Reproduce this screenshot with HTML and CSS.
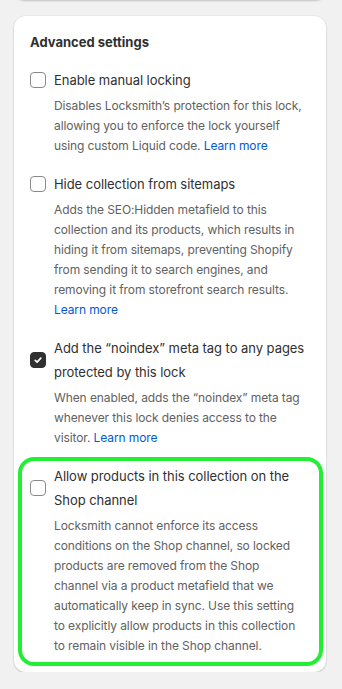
FILE: index.html
```html
<!DOCTYPE html>
<html lang="en">
<head>
  <meta charset="UTF-8">
  <meta name="viewport" content="width=device-width, initial-scale=1.0">
  <title>Advanced settings</title>
  <link rel="stylesheet" href="styles.css">
</head>
<body>
  <!-- bottom of the card above, scrolled off -->
  <div class="card card-prev"></div>

  <div class="card">
    <h2 class="card-title">Advanced settings</h2>

    <div class="option">
      <div class="option-row">
        <span class="checkbox"></span>
        <span class="option-label">Enable manual locking</span>
      </div>
      <p class="option-help">Disables Locksmith’s protection for this lock, allowing you to enforce the lock yourself using custom Liquid code. <a href="#">Learn more</a></p>
    </div>

    <div class="option">
      <div class="option-row">
        <span class="checkbox"></span>
        <span class="option-label">Hide collection from sitemaps</span>
      </div>
      <p class="option-help">Adds the SEO:Hidden metafield to this collection and its products, which results in hiding it from sitemaps, preventing Shopify from sending it to search engines, and removing it from storefront search results. <a href="#">Learn more</a></p>
    </div>

    <div class="option">
      <div class="option-row">
        <span class="checkbox checked">
          <svg width="10" height="10" viewBox="0 0 10 10"><path d="M2.2 5.3l1.9 1.8 3.7-4" fill="none" stroke="#fff" stroke-width="1.6" stroke-linecap="round" stroke-linejoin="round"/></svg>
        </span>
        <span class="option-label">Add the “noindex” meta tag to any pages protected by this lock</span>
      </div>
      <p class="option-help">When enabled, adds the “noindex” meta tag whenever this lock denies access to the visitor. <a href="#">Learn more</a></p>
    </div>

    <div class="option highlighted">
      <div class="option-row">
        <span class="checkbox"></span>
        <span class="option-label">Allow products in this collection on the Shop channel</span>
      </div>
      <p class="option-help">Locksmith cannot enforce its access conditions on the Shop channel, so locked products are removed from the Shop channel via a product metafield that we automatically keep in sync. Use this setting to explicitly allow products in this collection to remain visible in the Shop channel.</p>
    </div>
  </div>
</body>
</html>
```

FILE: styles.css
```css
/* General Styles */
* {
  box-sizing: border-box;
}

body {
  margin: 0;
  padding: 0 16px 0 14px;
  background-color: #f1f1f1;
  font-family: Inter, "Noto Sans", sans-serif;
  color: #303030;
}

.card {
  background-color: #fff;
  border-radius: 12px;
  box-shadow: 0 1px 2px rgba(26, 26, 26, 0.18), 0 0 0 1px rgba(26, 26, 26, 0.03);
  padding: 16px;
  margin-top: 16px;
}

.card-prev {
  height: 20px;
  padding: 0;
  margin-top: -20px;
}

.card-title {
  margin: 0;
  font-size: 13px;
  line-height: 20px;
  font-weight: 650;
}

/* Options */
.option {
  margin-top: 16px;
}

.option-row {
  display: flex;
  align-items: center;
  gap: 8px;
}

.checkbox {
  flex: none;
  width: 16px;
  height: 16px;
  border: 1px solid #8a8a8a;
  border-radius: 4px;
  background-color: #fff;
  display: flex;
  align-items: center;
  justify-content: center;
}

.checkbox.checked {
  background-color: #303030;
  border-color: #303030;
}

.option-label {
  font-size: 13px;
  line-height: 24px;
  letter-spacing: -0.05px;
}

.option-help {
  margin: 4px 0 0 24px;
  font-size: 12px;
  line-height: 20px;
  letter-spacing: -0.1px;
  color: #616161;
}

.option-help a {
  color: #005bd3;
  text-decoration: none;
}

/* Highlight around the last option */
.highlighted {
  position: relative;
}

.highlighted .option-help {
  margin-right: 6px;
}

.highlighted::after {
  content: "";
  position: absolute;
  top: -7px;
  bottom: -10px;
  left: -12px;
  right: -13px;
  border: 4px solid #22ee33;
  border-radius: 16px;
  pointer-events: none;
}
```
